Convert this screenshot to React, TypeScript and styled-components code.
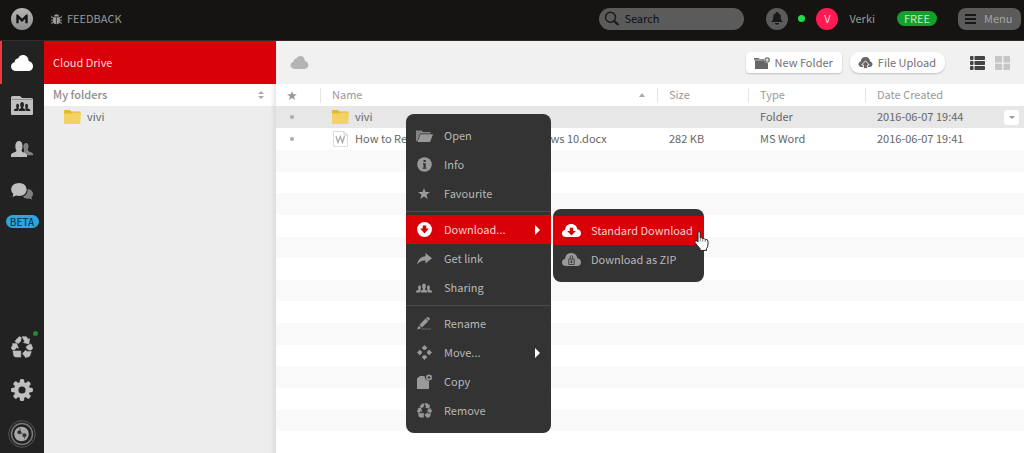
import React from "react";
import styled, { createGlobalStyle } from "styled-components";

const GlobalStyle = createGlobalStyle`
  * { box-sizing: border-box; }
  body {
    margin: 0;
    font-family: "Noto Sans CJK SC", "Open Sans", sans-serif;
    font-size: 11px;
    line-height: 18px;
    color: #666;
    background: #fff;
  }
  button, input { font: inherit; color: inherit; border: 0; margin: 0; padding: 0; background: none; }
  ul { list-style: none; margin: 0; padding: 0; }
  svg { display: block; flex: none; }
`;

/* ---------- icons ---------- */

type IconProps = { w?: number; h?: number };

const CloudIcon = ({ w = 22, h = 16 }: IconProps) => (
  <svg width={w} height={h} viewBox="0 0 22 16" fill="currentColor" aria-hidden="true">
    <path d="M5 16C2 16 0 14 0 11.500C0 9.300 1.500 7.500 3.500 7.200C3.600 5 5.200 3.400 7.200 3.200C8.200 1.200 9.900 0 12 0C15.300 0 17.500 2.500 17.600 6C20.200 6.500 22 8.500 22 11.200C22 14 20 16 17.200 16Z" />
  </svg>
);

const PeoplePath = () => (
  <>
    <path d="M0 10V8.800C0 7.800 2.800 7.700 3 6.800C2.200 5.700 2 2 4 2C6 2 5.800 5.700 5 6.800C5 7.200 5.500 7.400 6 7.600C5 8.200 4.500 8.600 4.500 10Z" />
    <path d="M18 10V8.800C18 7.800 15.200 7.700 15 6.800C15.800 5.700 16 2 14 2C12 2 12.200 5.700 13 6.800C13 7.200 12.500 7.400 12 7.600C13 8.200 13.500 8.600 13.500 10Z" />
    <path d="M5.200 10V9C5.200 7.600 7.800 7.400 8 6.200C6.500 4.800 6.300 0 9 0C11.700 0 11.500 4.800 10 6.200C10.200 7.400 12.800 7.600 12.800 9V10Z" />
  </>
);

const SharingIcon = () => (
  <svg width="16" height="10" viewBox="0 0 18 10" fill="currentColor" aria-hidden="true">
    <PeoplePath />
  </svg>
);

const SharedFolderIcon = () => (
  <svg width="22" height="19" viewBox="0 0 22 19" aria-hidden="true">
    <path fill="currentColor" d="M0 1.500Q0 0 1.500 0H9L11 2H20.500Q22 2 22 3.500V18Q22 19 21 19H1Q0 19 0 18Z" />
    <path stroke="#222" strokeWidth="1" opacity=".3" d="M1 3.500H21" />
    <g fill="#222" transform="translate(3 6) scale(.9)">
      <PeoplePath />
    </g>
  </svg>
);

const ContactsIcon = () => (
  <svg width="22" height="16" viewBox="0 0 22 16" fill="currentColor" aria-hidden="true">
    <path opacity=".6" d="M13 14V8C12 6 12.300 2 15 2C18 2 18 6.500 16.800 8.500C16.500 11 22 11 22 13V14.300H15Z" />
    <path d="M0 16V14C0 11.500 5.500 11.500 5.500 9.500C3.800 7.500 3.500 0 8 0C12.500 0 12 7.500 10.500 9.500C10.500 11.500 15.500 11.500 16 14V16Z" />
  </svg>
);

const ChatIcon = () => (
  <svg width="22" height="17" viewBox="0 0 22 17" fill="currentColor" aria-hidden="true">
    <path opacity=".6" d="M16.500 6C20 6.300 22 8.500 22 11C22 12.500 21.300 13.500 20.500 14.200L21 16.500L18.500 15.500C15.500 16.200 12.500 15 12 13.500C15 12.500 17 9.500 16.500 6Z" />
    <path d="M8 0C12.500 0 15.600 2.800 15.600 6.500C15.600 10.200 12.500 13 8 13C7 13 6 12.900 5.200 12.600L1.500 14L2.400 11C1 9.900 0.200 8.300 0.200 6.500C0.200 2.800 3.500 0 8 0Z" />
  </svg>
);

const RecycleIcon = ({ w = 22, h = 22 }: IconProps) => (
  <svg width={w} height={h} viewBox="0 0 22 22" fill="currentColor" stroke="currentColor" strokeWidth=".6" strokeLinejoin="round" aria-hidden="true">
    <path d="M5 4L7.800 1Q9.300 0.400 10.300 1.700L9.500 5.500L7.300 7.400L4 5.600Z" />
    <path d="M11.200 0.700H15.300L17.200 3.200L18.600 2.700L17.800 8L12.400 6.500L13.600 5.200Z" />
    <path d="M16 9.900L19.900 7.900L21.700 12L20.300 14H17.400L15.100 11.400Z" />
    <path d="M11.500 17.500L15 14V15.600H20.300L18.700 20Q18 21 16.500 21H15V21.900Z" />
    <path d="M2 15H9.800V21H5Q3.500 21 2.800 19.500Z" />
    <path d="M1.200 7.800L5.600 7.500L7.400 12.200L5.400 11.700L3.700 13.800H1.300L0.300 11.600L2 8.900Z" />
  </svg>
);

const GearIcon = () => (
  <svg width="22" height="22" viewBox="0 0 22 22" aria-hidden="true">
    <g fill="currentColor">
      {[0, 45, 90, 135].map((a) => (
        <rect key={a} x="8.800" y="0" width="4.400" height="22" rx="1.600" transform={`rotate(${a} 11 11)`} />
      ))}
      <circle cx="11" cy="11" r="8" />
    </g>
    <circle cx="11" cy="11" r="3.600" fill="#222" />
  </svg>
);

const OrbIcon = () => (
  <svg width="28" height="28" viewBox="0 0 28 28" fill="none" aria-hidden="true">
    <circle cx="14" cy="14" r="13.300" stroke="#555" />
    <circle cx="14" cy="14" r="10.500" stroke="#777" strokeWidth="1.500" />
    <circle cx="13.500" cy="14" r="7.300" fill="#aaa" />
    <circle cx="11.300" cy="12.300" r="2" fill="#333" />
    <circle cx="16.500" cy="15.300" r="2" fill="#333" />
    <path d="M12 8V11M15 13L13 14M16.500 16V19" stroke="#444" strokeWidth=".7" />
  </svg>
);

const LogoIcon = () => (
  <svg width="22" height="22" viewBox="0 0 22 22" aria-hidden="true">
    <defs>
      <linearGradient id="logo" x2="0" y2="1">
        <stop stopColor="#b5b5b5" />
        <stop offset="1" stopColor="#8c8c8c" />
      </linearGradient>
    </defs>
    <circle cx="11" cy="11" r="11" fill="url(#logo)" />
    <path d="M5.300 15.200V6.500H6.800L11 10.700L15.200 6.500H16.700V15.200H14.300V10.800L11 14L7.700 10.800V15.200Z" fill="#151412" />
  </svg>
);

const BugIcon = () => (
  <svg width="11" height="12" viewBox="0 0 12 12" fill="currentColor" aria-hidden="true">
    <path d="M3.300 3.200C3.300 0 8.700 0 8.700 3.200Z" />
    <path d="M2.500 4H5.700V11.800C3.200 11.500 2 9.500 2 7.500ZM6.300 4H9.500L10 7.500C10 9.500 8.800 11.500 6.300 11.800Z" />
    <path d="M.8 2.500V4.500H3M11.200 2.500V4.500H9M0 7.300H3M12 7.300H9M1 11.500V9.700H3.500M11 11.500V9.700H8.500" fill="none" stroke="currentColor" />
  </svg>
);

const SearchIcon = () => (
  <svg width="16" height="16" viewBox="0 0 16 16" fill="none" stroke="#1c1b19" aria-hidden="true">
    <circle cx="6.500" cy="6.200" r="5" strokeWidth="1.500" />
    <path d="M10 9.800L14.500 14" strokeWidth="2.300" />
  </svg>
);

const BellIcon = () => (
  <svg width="12" height="13" viewBox="0 0 12 13" fill="#1a1917" aria-hidden="true">
    <path d="M6 0C7 0 7.300.6 7.300 1.200C9.300 1.800 9.800 3.500 9.800 5.500C9.800 8 10.500 8.600 12 10H0C1.500 8.600 2.200 8 2.200 5.500C2.200 3.500 2.700 1.800 4.700 1.200C4.700.6 5 0 6 0ZM4 11H8C8 13.300 4 13.300 4 11Z" />
  </svg>
);

const BarsIcon = () => (
  <svg width="11" height="10" viewBox="0 0 11 10" fill="#181715" aria-hidden="true">
    <path d="M0 0H11V2H0ZM0 4H11V6H0ZM0 8H11V10H0Z" />
  </svg>
);

const NewFolderIcon = () => (
  <svg width="16" height="12" viewBox="0 0 16 12" aria-hidden="true">
    <path fill="#666" d="M0 1H4.500L5.500 2H10Q10 6 14 6.200V12H1V3.500H0Z" />
    <path stroke="#fff" strokeWidth=".6" d="M0 3H9.500" />
    <circle cx="13.200" cy="3" r="2.800" fill="#777" />
    <path d="M13.200 1.500V4.500M11.700 3H14.700" stroke="#fff" />
  </svg>
);

const UploadIcon = () => (
  <svg width="15" height="12" viewBox="0 0 14 12" aria-hidden="true">
    <path fill="#666" d="M3 10C1 10 0 8.700 0 7.200C0 5.800 1 4.800 2.300 4.500C2.200 2 4 0 7 0C9.800 0 11.500 2 11.600 4.500C13 4.800 14 5.800 14 7.300C14 8.800 12.800 10 11 10Z" />
    <path fill="#666" stroke="#fff" strokeWidth=".8" d="M7 3.800L10.800 8H9V11.500H5V8H3.200Z" />
  </svg>
);

const ListIcon = () => (
  <svg width="15" height="14" viewBox="0 0 15 14" fill="#444" aria-hidden="true">
    {[0, 5, 10].map((y) => (
      <g key={y}>
        <rect y={y} width="3.500" height="4" rx=".8" />
        <rect x="4.500" y={y} width="10.500" height="4" rx=".8" />
      </g>
    ))}
  </svg>
);

const GridIcon = () => (
  <svg width="15" height="14" viewBox="0 0 15 14" fill="#c6c6c6" aria-hidden="true">
    <path d="M0 0H7V6.500H0ZM8.500 0H15V6.500H8.500ZM0 7.800H7V14H0ZM8.500 7.800H15V14H8.500Z" />
  </svg>
);

const FolderIcon = () => (
  <svg width="17" height="14" viewBox="0 0 17 14" aria-hidden="true">
    <path fill="#e5b92c" d="M0 1Q0 0 1 0H6L7.500 1.500H15.500Q16.500 1.500 16.500 2.500V6H0Z" />
    <path fill="#f2d264" d="M0 3.500H7L8 2.500H16.500V13Q16.500 14 15.500 14H1Q0 14 0 13Z" />
  </svg>
);

const WordIcon = () => (
  <svg width="17" height="16" viewBox="0 0 17 16" fill="none" aria-hidden="true">
    <path d="M1.500.5H12L15.500 4V15.500H1.500Z" fill="#fff" stroke="#ddd" />
    <path d="M12 .5V4H15.500" stroke="#ccc" />
    <path d="M4 5L6 11.500L8.300 5.500L10.500 11.500L12.500 5" stroke="#aaa" strokeWidth="1.300" />
  </svg>
);

const StarIcon = ({ w = 12, h = 11 }: IconProps) => (
  <svg width={w} height={h} viewBox="0 0 12 11" fill="currentColor" aria-hidden="true">
    <path d="M6 0L7.500 3.900L12 4.100L8.500 6.800L9.700 11L6 8.600L2.300 11L3.500 6.800L0 4.100L4.500 3.900Z" />
  </svg>
);

const SortIcon = () => (
  <svg width="6" height="8" viewBox="0 0 6 8" fill="#aaa" aria-hidden="true">
    <path d="M3 0L6 3H0ZM3 8L6 5H0Z" />
  </svg>
);

const UpIcon = () => (
  <svg width="6" height="4" viewBox="0 0 6 4" fill="#aaa" aria-hidden="true">
    <path d="M3 0L6 4H0Z" />
  </svg>
);

const DownIcon = () => (
  <svg width="6" height="3" viewBox="0 0 6 3" fill="#999" aria-hidden="true">
    <path d="M0 0H6L3 3Z" />
  </svg>
);

const OpenIcon = () => (
  <svg width="17" height="12" viewBox="0 0 17 12" fill="currentColor" aria-hidden="true">
    <path opacity=".8" d="M0 11V0.500H5.500L7 2H14.500V3.500H4L1.200 11.500Z" />
    <path d="M4.500 4.200H17L14 12H1.500Z" />
  </svg>
);

const InfoIcon = () => (
  <svg width="15" height="15" viewBox="0 0 15 15" aria-hidden="true">
    <circle cx="7.500" cy="7.500" r="7.300" fill="currentColor" />
    <path fill="#333" d="M6.500 3H8.700V5H6.500ZM5.800 6.200H8.700V10.800H9.500V11.800H5.700V10.800H6.500V7.200H5.800Z" />
  </svg>
);

const DownloadIcon = () => (
  <svg width="15" height="15" viewBox="0 0 15 15" aria-hidden="true">
    <circle cx="7.500" cy="7.500" r="7.400" fill="#fff" />
    <path fill="#d90007" d="M5.700 3.500H9.300V6.500H11.800L7.500 11.500L3.200 6.500H5.700Z" />
  </svg>
);

const LinkIcon = () => (
  <svg width="15" height="12" viewBox="0 0 15 12" fill="currentColor" aria-hidden="true">
    <path d="M8.500 0L15 5.300L8.500 10.500V7.500C5 7.300 2.500 8.500 0 11.500C1 7 3.500 3.700 8.500 3.300Z" />
  </svg>
);

const RenameIcon = () => (
  <svg width="15" height="13" viewBox="0 0 15 13" fill="currentColor" aria-hidden="true">
    <path d="M9 1L10.500 0Q13 .3 12.700 2.500L11.800 3.700ZM8.500 1.500L11.300 4.200L5 10.500L2.300 8ZM1.700 8.700L4.300 11.200L0 12.500Z" />
    <path opacity=".5" d="M5 11.500H14V12.500H4Z" />
  </svg>
);

const MoveIcon = () => (
  <svg width="15" height="15" viewBox="0 0 15 15" fill="currentColor" stroke="currentColor" strokeLinejoin="round" strokeWidth=".8" aria-hidden="true">
    <path d="M7.500 .4L9.800 2.700L8.500 4.500H6.500L5.200 2.700ZM7.500 14.600L9.800 12.300L8.500 10.500H6.500L5.200 12.300ZM.4 7.500L2.700 5.200L4.500 6.500V8.500L2.700 9.800ZM14.600 7.500L12.300 5.200L10.500 6.500V8.500L12.300 9.800Z" />
  </svg>
);

const CopyIcon = () => (
  <svg width="15" height="15" viewBox="0 0 15 15" aria-hidden="true">
    <path fill="currentColor" d="M0 4.500L3 2H7.500Q8 6.500 12 6.800V15H0Z" />
    <circle cx="12" cy="3.500" r="3" fill="currentColor" />
    <path stroke="#333" d="M12 2V5M10.500 3.500H13.500" />
  </svg>
);

const CloudDownIcon = () => (
  <svg width="19" height="13" viewBox="0 0 19 13" aria-hidden="true">
    <path fill="#fff" d="M4 13C1.500 13 0 11.600 0 9.500C0 7.500 1.300 6 3.200 5.800C3.200 2.300 5.700 0 9.200 0C12.600 0 15 2.300 15.300 5.300C17.500 5.600 19 7.200 19 9.300C19 11.500 17.500 13 15 13Z" />
    <path fill="#d90007" d="M7.800 3.800H11.200V7H13.800L9.500 11.500L5.200 7H7.800Z" />
  </svg>
);

const CloudZipIcon = () => (
  <svg width="19" height="13" viewBox="0 0 19 13" aria-hidden="true">
    <path fill="currentColor" d="M4 13C1.500 13 0 11.600 0 9.500C0 7.500 1.300 6 3.200 5.800C3.200 2.300 5.700 0 9.200 0C12.600 0 15 2.300 15.300 5.300C17.500 5.600 19 7.200 19 9.300C19 11.500 17.500 13 15 13Z" />
    <path fill="none" stroke="#333" strokeWidth=".8" d="M6.800 11.500V6H12.200V11.500ZM8.200 6V3.500Q9.500 2 10.800 3.500V6" />
    <rect x="8.700" y="7.500" width="1.600" height="2.500" fill="#333" />
  </svg>
);

const HandIcon = () => (
  <svg width="15" height="20" viewBox="0 0 15 20" aria-hidden="true">
    <path
      fill="#fff"
      stroke="#222"
      strokeWidth="1"
      strokeLinejoin="round"
      d="M4 1.800Q4 .6 5 .6Q6.200.6 6.200 1.800V7Q8 6 8.600 7.600Q10.500 6.800 11.200 8.500Q14 8 14 10.500V13Q14 16 12.500 17.500V19.400H6V17.500Q3.500 15 1 11.500Q.5 10 2 9.700Q3 9.700 4 11Z"
    />
    <path stroke="#555" strokeWidth=".7" d="M6.200 7V10.500M8.700 7.800V10.500M11.200 8.700V11" />
  </svg>
);

/* ---------- page frame ---------- */

const Page = styled.div`
  min-height: 100vh;
  display: flex;
  flex-direction: column;
`;

/* The font's tall ascent sets text low in its line; the padding centres it beside icons. */
const Label = styled.span`
  padding-bottom: 2px;
`;

const Header = styled.header`
  display: flex;
  align-items: center;
  height: 41px;
  padding: 0 3px 3px 0;
  background: #151412;
  border-bottom: 1px solid #2e2d2c;
  color: #999;
`;

const HomeLink = styled.a`
  display: flex;
  justify-content: center;
  width: 43px;
`;

const Feedback = styled.button`
  display: flex;
  align-items: center;
  gap: 5px;
  margin: 0 auto 0 8px;
`;

const SearchBox = styled.label`
  display: flex;
  align-items: center;
  gap: 4px;
  width: 145px;
  height: 22px;
  padding-left: 5px;
  border-radius: 11px;
  background: #5b5b5b;
  input {
    flex: 1;
    min-width: 0;
    padding-bottom: 2px;
    color: #111;
    outline: 0;
  }
  input::placeholder { color: #111; opacity: 1; }
`;

const RoundButton = styled.button<{ $bg: string; $fg?: string }>`
  display: flex;
  align-items: center;
  justify-content: center;
  width: 22px;
  height: 22px;
  border-radius: 50%;
  background: ${(p) => p.$bg};
  color: ${(p) => p.$fg};
`;

const Account = styled.div`
  display: flex;
  align-items: center;
  margin-left: 22px;
`;

const Dot = styled.span`
  width: 7px;
  height: 7px;
  margin: 0 11px 0 10px;
  border-radius: 50%;
  background: #1fdc48;
`;

const UserName = styled(Label)`
  margin-left: 11px;
`;

const PlanBadge = styled.span`
  width: 40px;
  margin: 0 21px 0 22px;
  border-radius: 8px;
  background: #12a12c;
  color: #c5e6ca;
  line-height: 15px;
  text-align: center;
`;

const MenuButton = styled.button`
  display: flex;
  align-items: center;
  gap: 8px;
  width: 63px;
  height: 22px;
  padding-left: 7px;
  border-radius: 8px;
  background: #5b5b5b;
  color: #a5a5a5;
`;

const Body = styled.div`
  flex: 1;
  display: flex;
`;

const Rail = styled.nav`
  display: flex;
  flex-direction: column;
  width: 44px;
  background: #222;
`;

const RailButton = styled.button<{ $active?: boolean }>`
  position: relative;
  display: flex;
  align-items: center;
  justify-content: center;
  height: 43px;
  border-left: 2px solid ${(p) => (p.$active ? "#f0373a" : "transparent")};
  padding-right: 2px;
  color: ${(p) => (p.$active ? "#fff" : "#bfbfbf")};
`;

const RailFooter = styled.div`
  display: flex;
  flex-direction: column;
  margin-top: auto;
  ${RailButton}:last-child {
    height: 42px;
    padding-top: 4px;
  }
`;

const Beta = styled.span`
  align-self: center;
  width: 33px;
  margin-top: 2px;
  border-radius: 7px;
  background: #2ba6de;
  color: #143a50;
  font-size: 10px;
  font-weight: 500;
  line-height: 13px;
  text-align: center;
`;

const Notice = styled.span`
  position: absolute;
  top: 6px;
  right: 6px;
  width: 5px;
  height: 5px;
  border-radius: 50%;
  background: #1f8a35;
`;

const Sidebar = styled.aside`
  width: 232px;
  background: linear-gradient(to left, #dcdcdc, #ededed 6px);
`;

const SidebarTitle = styled.h1`
  margin: 0;
  padding-left: 9px;
  background: #d90007;
  color: #fbdcdc;
  font-size: 11px;
  font-weight: 400;
  line-height: 43px;
`;

const SidebarHead = styled.div`
  display: flex;
  align-items: center;
  justify-content: space-between;
  height: 22px;
  padding: 0 12px 0 9px;
  background: linear-gradient(to left, #e8e8e8, #fff 6px);
  color: #8c8c8c;
  font-weight: 500;
`;

const TreeItem = styled.button`
  display: flex;
  align-items: center;
  gap: 6px;
  height: 22px;
  padding-left: 20px;
`;

const Main = styled.main`
  flex: 1;
  min-width: 0;
  display: flex;
  flex-direction: column;
`;

const Toolbar = styled.div`
  display: flex;
  align-items: center;
  height: 43px;
  padding: 0 14px;
  background: #f1f1f1;
  color: #b4b4b4;
`;

const Actions = styled.div`
  display: flex;
  align-items: center;
  gap: 8px;
  margin-left: auto;
`;

const ActionButton = styled.button<{ $round?: boolean }>`
  display: flex;
  align-items: center;
  gap: 5px;
  height: 21px;
  padding: 0 9px 0 8px;
  border-radius: ${(p) => (p.$round ? 9 : 4)}px;
  background: #fff;
  box-shadow: 0 1px 2px rgba(0, 0, 0, 0.2);
  color: #707070;
`;

const Views = styled.div`
  display: flex;
  gap: 10px;
  margin-left: 25px;
`;

/* ---------- file list ---------- */

const FileTable = styled.table`
  width: 100%;
  table-layout: fixed;
  border-collapse: collapse;
`;

const Th = styled.th<{ $w?: number }>`
  width: ${(p) => (p.$w ? `${p.$w}px` : "auto")};
  height: 22px;
  padding: 0 12px;
  background: linear-gradient(#e6e6e6, #e6e6e6) 0 50% / 1px 15px no-repeat;
  color: #999;
  font-weight: 400;
  text-align: left;
  &:first-child { background: none; }
`;

const Td = styled.td`
  height: 22px;
  padding: 0 12px;
  white-space: nowrap;
`;

const Row = styled.tr<{ $selected?: boolean }>`
  background: ${(p) => (p.$selected ? "#e7e7e7" : "#fff")};
`;

const Cell = styled.div<{ $spread?: boolean }>`
  display: flex;
  align-items: center;
  gap: 6px;
  justify-content: ${(p) => (p.$spread ? "space-between" : "flex-start")};
`;

const StarCell = styled(Cell)`
  justify-content: center;
  padding-right: 12px;
  margin: 0 -6px;
`;

const FavDot = styled.span`
  width: 4px;
  height: 4px;
  border-radius: 50%;
  background: #aaa;
`;

const RowMenu = styled.button`
  display: flex;
  align-items: center;
  justify-content: center;
  width: 15px;
  height: 15px;
  margin-right: -7px;
  border-radius: 3px;
  background: #fff;
`;

const EmptyRows = styled.div`
  flex: 1;
  display: flex;
  flex-direction: column;
`;

const EmptyRow = styled.div`
  flex: 1;
  &:nth-child(odd) { background: #f9f9f9; }
`;

/* ---------- context menus ---------- */

const MenuPanel = styled.ul<{ $x: number; $y: number; $w: number }>`
  position: absolute;
  left: ${(p) => p.$x}px;
  top: ${(p) => p.$y}px;
  width: ${(p) => p.$w}px;
  padding: 7px 0 8px;
  border-radius: 8px;
  background: #333;
`;

const MenuItem = styled.button<{ $active?: boolean }>`
  display: flex;
  align-items: center;
  width: 100%;
  height: 29px;
  padding: 0 11px 0 8px;
  background: ${(p) => (p.$active ? "#d90007" : "transparent")};
  color: ${(p) => (p.$active ? "#f8d0d0" : "#b8b8b8")};
  white-space: nowrap;
`;

const MenuIcon = styled.span`
  display: flex;
  justify-content: center;
  width: 20px;
  margin-right: 10px;
  color: #999;
`;

const Arrow = styled.span`
  margin-left: auto;
  border: 5px solid transparent;
  border-left-color: #fff;
  border-right-width: 0;
`;

const Divider = styled.li`
  height: 1px;
  margin: 3px 0;
  background: #4c4c4c;
`;

const Pointer = styled.div`
  position: absolute;
  left: 694px;
  top: 231px;
`;

type Entry = { label: string; icon: React.ReactNode; active?: boolean; more?: boolean };

const groups: Entry[][] = [
  [
    { label: "Open", icon: <OpenIcon /> },
    { label: "Info", icon: <InfoIcon /> },
    { label: "Favourite", icon: <StarIcon /> },
  ],
  [
    { label: "Download...", icon: <DownloadIcon />, active: true, more: true },
    { label: "Get link", icon: <LinkIcon /> },
    { label: "Sharing", icon: <SharingIcon /> },
  ],
  [
    { label: "Rename", icon: <RenameIcon /> },
    { label: "Move...", icon: <MoveIcon />, more: true },
    { label: "Copy", icon: <CopyIcon /> },
    { label: "Remove", icon: <RecycleIcon w={15} h={15} /> },
  ],
];

const downloads: Entry[] = [
  { label: "Standard Download", icon: <CloudDownIcon />, active: true },
  { label: "Download as ZIP", icon: <CloudZipIcon /> },
];

const MenuEntry = ({ label, icon, active, more }: Entry) => (
  <li role="none">
    <MenuItem role="menuitem" $active={active}>
      <MenuIcon>{icon}</MenuIcon>
      <Label>{label}</Label>
      {more && <Arrow />}
    </MenuItem>
  </li>
);

const files = [
  { name: "vivi", icon: <FolderIcon />, size: "", type: "Folder", date: "2016-06-07 19:44", selected: true },
  {
    name: "How to Recover Deleted Files in Windows 10.docx",
    icon: <WordIcon />,
    size: "282 KB",
    type: "MS Word",
    date: "2016-06-07 19:41",
    selected: false,
  },
];

export default function App() {
  return (
    <Page>
      <GlobalStyle />
      <Header>
        <HomeLink href="#" aria-label="Home"><LogoIcon /></HomeLink>
        <Feedback><BugIcon /><Label>FEEDBACK</Label></Feedback>
        <SearchBox>
          <SearchIcon />
          <input type="text" placeholder="Search" aria-label="Search" />
        </SearchBox>
        <Account>
          <RoundButton $bg="#5b5b5b" aria-label="Notifications"><BellIcon /></RoundButton>
          <Dot />
          <RoundButton $bg="#ff1a53" $fg="#ffd0da"><Label>V</Label></RoundButton>
          <UserName>Verki</UserName>
          <PlanBadge>FREE</PlanBadge>
          <MenuButton><BarsIcon /><Label>Menu</Label></MenuButton>
        </Account>
      </Header>
      <Body>
        <Rail>
          <RailButton $active aria-label="Cloud Drive"><CloudIcon /></RailButton>
          <RailButton aria-label="Shared with me"><SharedFolderIcon /></RailButton>
          <RailButton aria-label="Contacts"><ContactsIcon /></RailButton>
          <RailButton aria-label="Chat"><ChatIcon /></RailButton>
          <Beta>BETA</Beta>
          <RailFooter>
            <RailButton aria-label="Rubbish bin"><RecycleIcon /><Notice /></RailButton>
            <RailButton aria-label="Settings"><GearIcon /></RailButton>
            <RailButton aria-label="Transfers"><OrbIcon /></RailButton>
          </RailFooter>
        </Rail>
        <Sidebar>
          <SidebarTitle>Cloud Drive</SidebarTitle>
          <SidebarHead><Label>My folders</Label><SortIcon /></SidebarHead>
          <TreeItem><FolderIcon /><Label>vivi</Label></TreeItem>
        </Sidebar>
        <Main>
          <Toolbar>
            <CloudIcon w={19} h={13} />
            <Actions>
              <ActionButton><NewFolderIcon /><Label>New Folder</Label></ActionButton>
              <ActionButton $round><UploadIcon /><Label>File Upload</Label></ActionButton>
            </Actions>
            <Views>
              <button aria-label="List view"><ListIcon /></button>
              <button aria-label="Grid view"><GridIcon /></button>
            </Views>
          </Toolbar>
          <FileTable>
            <thead>
              <tr>
                <Th $w={44} aria-label="Favourite"><StarCell><StarIcon w={10} h={9} /></StarCell></Th>
                <Th><Cell $spread><Label>Name</Label><UpIcon /></Cell></Th>
                <Th $w={91}><Cell><Label>Size</Label></Cell></Th>
                <Th $w={117}><Cell><Label>Type</Label></Cell></Th>
                <Th $w={159}><Cell><Label>Date Created</Label></Cell></Th>
              </tr>
            </thead>
            <tbody>
              {files.map((f) => (
                <Row key={f.name} $selected={f.selected}>
                  <Td><StarCell><FavDot /></StarCell></Td>
                  <Td><Cell>{f.icon}<Label>{f.name}</Label></Cell></Td>
                  <Td><Cell><Label>{f.size}</Label></Cell></Td>
                  <Td><Cell><Label>{f.type}</Label></Cell></Td>
                  <Td>
                    <Cell $spread>
                      <Label>{f.date}</Label>
                      {f.selected && <RowMenu aria-label="More"><DownIcon /></RowMenu>}
                    </Cell>
                  </Td>
                </Row>
              ))}
            </tbody>
          </FileTable>
          <EmptyRows aria-hidden="true">
            {Array.from({ length: 14 }, (_, i) => <EmptyRow key={i} />)}
          </EmptyRows>
        </Main>
      </Body>
      <MenuPanel role="menu" $x={406} $y={114} $w={145}>
        {groups.map((group, i) => (
          <React.Fragment key={i}>
            {i > 0 && <Divider role="separator" />}
            {group.map((e) => <MenuEntry key={e.label} {...e} />)}
          </React.Fragment>
        ))}
      </MenuPanel>
      <MenuPanel role="menu" $x={553} $y={209} $w={151}>
        {downloads.map((e) => <MenuEntry key={e.label} {...e} />)}
      </MenuPanel>
      <Pointer><HandIcon /></Pointer>
    </Page>
  );
}
